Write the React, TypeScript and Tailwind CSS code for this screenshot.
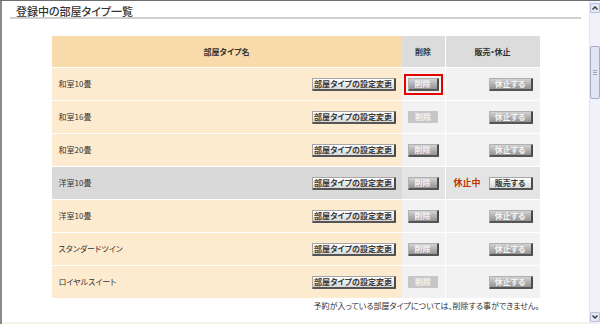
import React from 'react'

type Row = {
  name: string
  del: 'active' | 'raised' | 'flat'
  stopped?: boolean
}

const rows: Row[] = [
  { name: '和室10畳', del: 'active' },
  { name: '和室16畳', del: 'flat' },
  { name: '和室20畳', del: 'raised' },
  { name: '洋室10畳', del: 'raised', stopped: true },
  { name: '洋室10畳', del: 'raised' },
  { name: 'スタンダードツイン', del: 'raised' },
  { name: 'ロイヤルスイート', del: 'flat' },
]

function WhiteButton({ label, width }: { label: string; width: string }) {
  return (
    <div
      className={`${width} h-[13px] flex items-center justify-center bg-gradient-to-b from-white to-[#d9d9d9] border border-[#a5a5a5] border-r-2 border-b-2 border-r-[#4a4a4a] border-b-[#555] rounded-[1px] text-[8px] leading-none font-bold text-[#3a3a3a]`}
    >
      {label}
    </div>
  )
}

function GrayButton({ label, width }: { label: string; width: string }) {
  return (
    <div
      className={`${width} h-[13px] flex items-center justify-center bg-gradient-to-b from-[#d2d2d2] to-[#939393] border border-[#b0b0b0] border-r-2 border-b-2 border-r-[#4a4a4a] border-b-[#555] rounded-[1px] text-[8px] leading-none font-bold text-[#f4f4f4]`}
    >
      {label}
    </div>
  )
}

function FlatButton({ label }: { label: string }) {
  return (
    <div className="w-[30px] h-[12px] flex items-center justify-center bg-[#c6c6c6] text-[8px] leading-none font-bold text-[#f4f4f4]">
      {label}
    </div>
  )
}

function Scrollbar() {
  return (
    <div className="w-[11px] bg-[#f0f1fa] border-l border-[#e3e5f2] flex flex-col items-center">
      <div className="mt-[2px] w-[10px] h-[10px] bg-[#e4e7f6] border border-[#b9bfd9] rounded-[1px] flex items-center justify-center">
        <svg width="6" height="4" viewBox="0 0 6 4">
          <path d="M0.5 3.5 L3 1 L5.5 3.5" stroke="#333" strokeWidth="1.3" fill="none" />
        </svg>
      </div>
      <div className="mt-[33px] w-[10px] h-[53px] bg-[#e2e5f6] border border-[#a7acc8] rounded-[2px] flex flex-col items-center justify-center gap-px">
        <div className="w-[4px] h-px bg-[#a0a4bc]" />
        <div className="w-[4px] h-px bg-[#a0a4bc]" />
        <div className="w-[4px] h-px bg-[#a0a4bc]" />
      </div>
      <div className="flex-1" />
      <div className="mb-[2px] w-[10px] h-[10px] bg-[#e4e7f6] border border-[#b9bfd9] rounded-[1px] flex items-center justify-center">
        <svg width="6" height="4" viewBox="0 0 6 4">
          <path d="M0.5 0.5 L3 3 L5.5 0.5" stroke="#333" strokeWidth="1.3" fill="none" />
        </svg>
      </div>
    </div>
  )
}

export default function App() {
  return (
    <div className="w-[600px] h-[324px] flex bg-white border-t border-[#6f6f6f] overflow-hidden font-['Noto_Sans_CJK_JP',sans-serif] [font-feature-settings:'palt']">
      <div className="flex-1 border-l-2 border-[#8a8a8a] flex flex-col">
        {/* Title */}
        <div className="pl-[14px] pt-[5px] h-[16px] text-[11px] leading-[11px] font-medium text-[#333]">
          登録中の部屋タイプ一覧
        </div>
        <div className="mx-[8px] h-[2px] bg-[#cfcfcf]" />

        {/* Table */}
        <div className="mt-[17px] mx-auto w-[488px]">
          <div className="flex h-[31px] text-[8px] font-bold text-[#333]">
            <div className="w-[350px] bg-[#f9dbab] flex items-center justify-center">部屋タイプ名</div>
            <div className="w-[43px] bg-[#dcdcdc] flex items-center justify-center">削除</div>
            <div className="w-[95px] bg-[#dcdcdc] border-l border-white flex items-center justify-center">
              販売・休止
            </div>
          </div>

          {rows.map((row, i) => (
            <div key={i} className="flex h-[33px] border-t border-white text-[8px] text-[#333]">
              <div
                className={`w-[350px] flex items-center justify-between pl-[7px] pr-[6px] ${
                  row.stopped ? 'bg-[#d9d9d9]' : 'bg-[#fdebd0]'
                }`}
              >
                <span>{row.name}</span>
                <WhiteButton label="部屋タイプの設定変更" width="w-[84px]" />
              </div>
              <div
                className={`w-[43px] flex items-center justify-center ${
                  row.stopped ? 'bg-[#e4e4e4]' : 'bg-[#f2f2f2]'
                }`}
              >
                {row.del === 'active' && (
                  <div className="w-[39px] h-[21px] border-2 border-[#e60000] flex items-center justify-center">
                    <GrayButton label="削除" width="w-[31px]" />
                  </div>
                )}
                {row.del === 'raised' && <GrayButton label="削除" width="w-[31px]" />}
                {row.del === 'flat' && <FlatButton label="削除" />}
              </div>
              <div
                className={`w-[95px] border-l border-white flex items-center pl-[8px] pr-[7px] ${
                  row.stopped ? 'bg-[#e4e4e4] justify-between' : 'bg-[#f2f2f2] justify-end'
                }`}
              >
                {row.stopped ? (
                  <>
                    <span className="text-[9px] font-bold text-[#c23300]">休止中</span>
                    <WhiteButton label="販売する" width="w-[44px]" />
                  </>
                ) : (
                  <GrayButton label="休止する" width="w-[44px]" />
                )}
              </div>
            </div>
          ))}

          <div className="mt-[3px] text-right text-[8px] leading-[10px] text-[#333]">
            予約が入っている部屋タイプについては、削除する事ができません。
          </div>
        </div>
        <div className="flex-1" />
        <div className="h-[2px] bg-[#f7f2e8]" />
      </div>
      <Scrollbar />
    </div>
  )
}
